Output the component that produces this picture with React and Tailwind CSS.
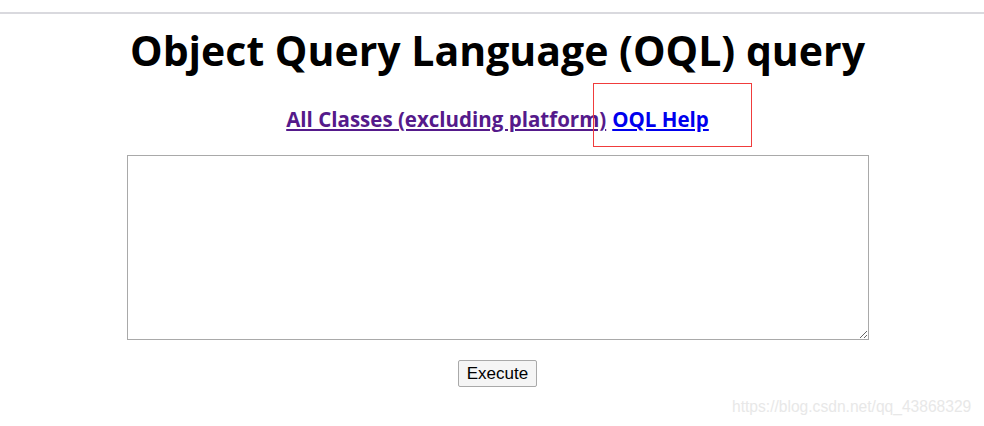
export default function App() {
  return (
    <div className="relative w-[984px] h-[426px] bg-white overflow-hidden" style={{ fontFamily: '"Open Sans", "Noto Sans", sans-serif' }}>
      <div className="h-[12px]" />
      <div className="h-[2px] bg-[#d9d9de]" />
      <div className="flex flex-col items-center pl-[11px]">
        <h1 className="mt-[12px] text-[41px] leading-[48px] font-bold text-black">Object Query Language (OQL) query</h1>
        <div className="mt-[31px] flex text-[20.5px] leading-[28px] font-bold">
          <a href="#" className="underline text-[#551a8b]">All Classes (excluding platform)</a>
          <span className="w-[6px]" />
          <a href="#" className="underline text-[#0000ee]">OQL Help</a>
        </div>
        <textarea className="mt-[22px] w-[742px] h-[185px] border border-[#a9a9a9] resize" />
        <button className="mt-[20px] h-[27px] px-[8px] border border-[#a9a9a9] bg-[#f5f5f5] rounded-[2px] text-[17px] leading-[20px] text-black" style={{ fontFamily: '"Liberation Sans", Arial, sans-serif' }}>Execute</button>
      </div>
      <div className="absolute left-[593px] top-[83px] w-[159px] h-[64px] border border-[#f03c3c]" />
      <div className="absolute left-[732px] top-[397px] text-[15.6px] leading-[20px] text-[#e8e8e8]" style={{ fontFamily: '"Liberation Sans", Arial, sans-serif' }}>https://blog.csdn.net/qq_43868329</div>
    </div>
  );
}
